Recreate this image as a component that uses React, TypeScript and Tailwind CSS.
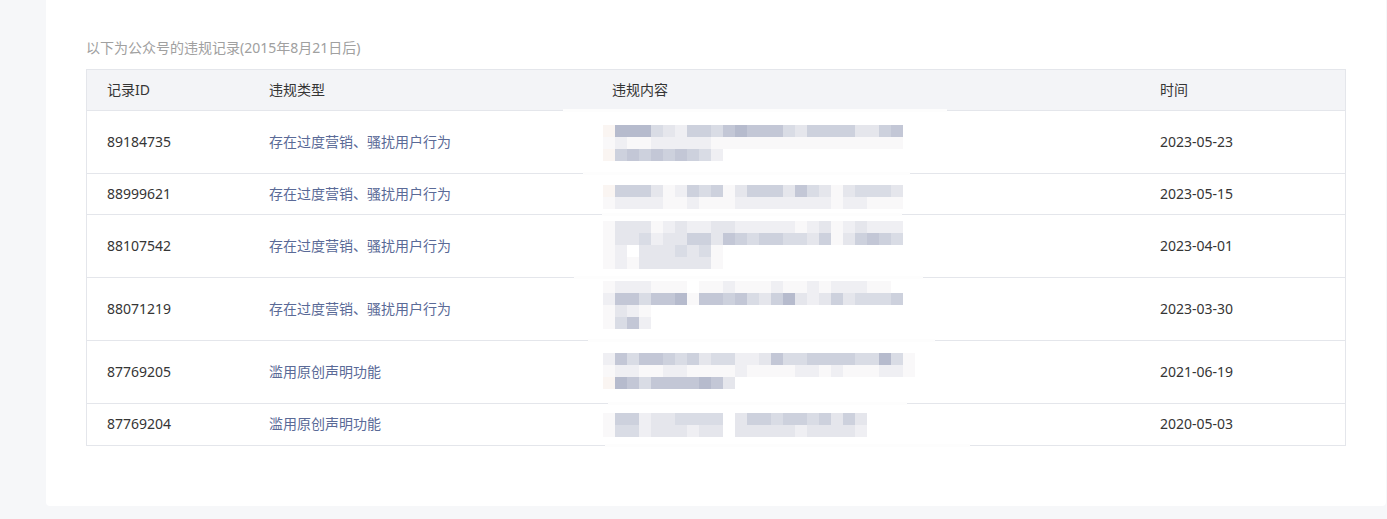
import React from "react";

const PALETTE: Record<string, string> = {
  "0": "#f9f8f9",
  "1": "#efeff3",
  "2": "#e5e6ec",
  "3": "#d9dce5",
  "4": "#cdd1dd",
  "5": "#c3c7d6",
  "6": "#b6bbcd",
  w: "#faf5f2",
};

function Mosaic({ rows, className }: { rows: string[]; className: string }) {
  const cols = Math.max(...rows.map((r) => r.length));
  return (
    <svg
      className={className}
      width={cols * 12}
      height={rows.length * 12}
      viewBox={`0 0 ${cols * 12} ${rows.length * 12}`}
      shapeRendering="crispEdges"
    >
      {rows.map((r, y) =>
        r.split("").map((c, x) =>
          PALETTE[c] ? (
            <rect key={`${x}-${y}`} x={x * 12} y={y * 12} width={12} height={12} fill={PALETTE[c]} />
          ) : null
        )
      )}
    </svg>
  );
}

type Row = {
  id: string;
  type: string;
  date: string;
  tall: boolean;
  mosaic: string[];
  mt: string;
  gap: string;
};

const ROWS: Row[] = [
  {
    id: "89184735",
    type: "存在过度营销、骚扰用户行为",
    date: "2023-05-23",
    tall: true,
    mosaic: ["w666321443565553244442245", "0100111110000000000000000", "w454545431"],
    mt: "mt-[14px]",
    gap: "left-[496px] w-[327px]",
  },
  {
    id: "88999621",
    type: "存在过度营销、骚扰用户行为",
    date: "2023-05-15",
    tall: false,
    mosaic: ["w444201434024442532023332", "0111100100011111111011000"],
    mt: "mt-[11px]",
    gap: "left-[515px] w-[300px]",
  },
  {
    id: "88107542",
    type: "存在过度营销、骚扰用户行为",
    date: "2023-04-01",
    tall: true,
    mosaic: [
      "0222012112211111012012111",
      "0223122442543443324024543",
      "01.2223230",
      "0102222220",
    ],
    mt: "mt-[6px]",
    gap: "left-[487px] w-[349px]",
  },
  {
    id: "88071219",
    type: "存在过度营销、骚扰用户行为",
    date: "2023-03-30",
    tall: true,
    mosaic: ["0111000.0010001001011100.", "1553556055453246212423334", "0210", "0351"],
    mt: "mt-[3px]",
    gap: "left-[501px] w-[347px]",
  },
  {
    id: "87769205",
    type: "滥用原创声明功能",
    date: "2021-06-19",
    tall: true,
    mosaic: ["15355434233112533444433630", "01100110000100001101000110", "w6535555652"],
    mt: "mt-[12px]",
    gap: "left-[521px] w-[299px]",
  },
  {
    id: "87769204",
    type: "滥用原创声明功能",
    date: "2020-05-03",
    tall: false,
    mosaic: ["0441223333.24434434242", "0331222122.22222122221"],
    mt: "mt-[9px]",
    gap: "left-[518px] w-[365px]",
  },
];

export default function App() {
  return (
    <div className="min-h-[519px] w-full bg-[#f6f7f9] font-['Noto_Sans','Noto_Sans_CJK_SC',sans-serif] text-[14px]">
      <div className="ml-[46px] mr-[1px] rounded-b-[4px] bg-white px-10 pb-[60px] pt-[38px]">
        <div className="mb-[11px] h-[20px] leading-[20px] text-[#a0a0a0]">
          以下为公众号的违规记录(2015年8月21日后)
        </div>
        <div className="border border-[#e4e6eb]">
          <div className="relative grid h-[41px] grid-cols-[162px_343px_548px_1fr] items-center border-b border-[#e4e6eb] bg-[#f3f4f7] pb-[1px] text-[#353535]">
            <div className="pl-5">记录ID</div>
            <div className="pl-5">违规类型</div>
            <div className="pl-5">违规内容</div>
            <div className="pl-5">时间</div>
            <div className="absolute bottom-[-2px] left-[476px] h-[3px] w-[384px] bg-[#fdfdfd]" />
          </div>
          {ROWS.map((r, i) => (
            <div
              key={r.id}
              className={
                "relative grid grid-cols-[162px_343px_548px_1fr] items-center pb-[2px] text-[#353535] " +
                (r.tall ? "h-[63px] " : "h-[41px] ") +
                (i < ROWS.length - 1 ? "border-b border-[#e4e6eb]" : "")
              }
            >
              <div className="pl-5">{r.id}</div>
              <div className="pl-5 text-[#5a6a97]">{r.type}</div>
              <div className="self-start pl-[11px]">
                <Mosaic rows={r.mosaic} className={"block " + r.mt} />
              </div>
              <div className="pl-5">{r.date}</div>
              <div className={"absolute bottom-[-2px] h-[3px] bg-[#fdfdfd] " + r.gap} />
            </div>
          ))}
        </div>
      </div>
    </div>
  );
}
